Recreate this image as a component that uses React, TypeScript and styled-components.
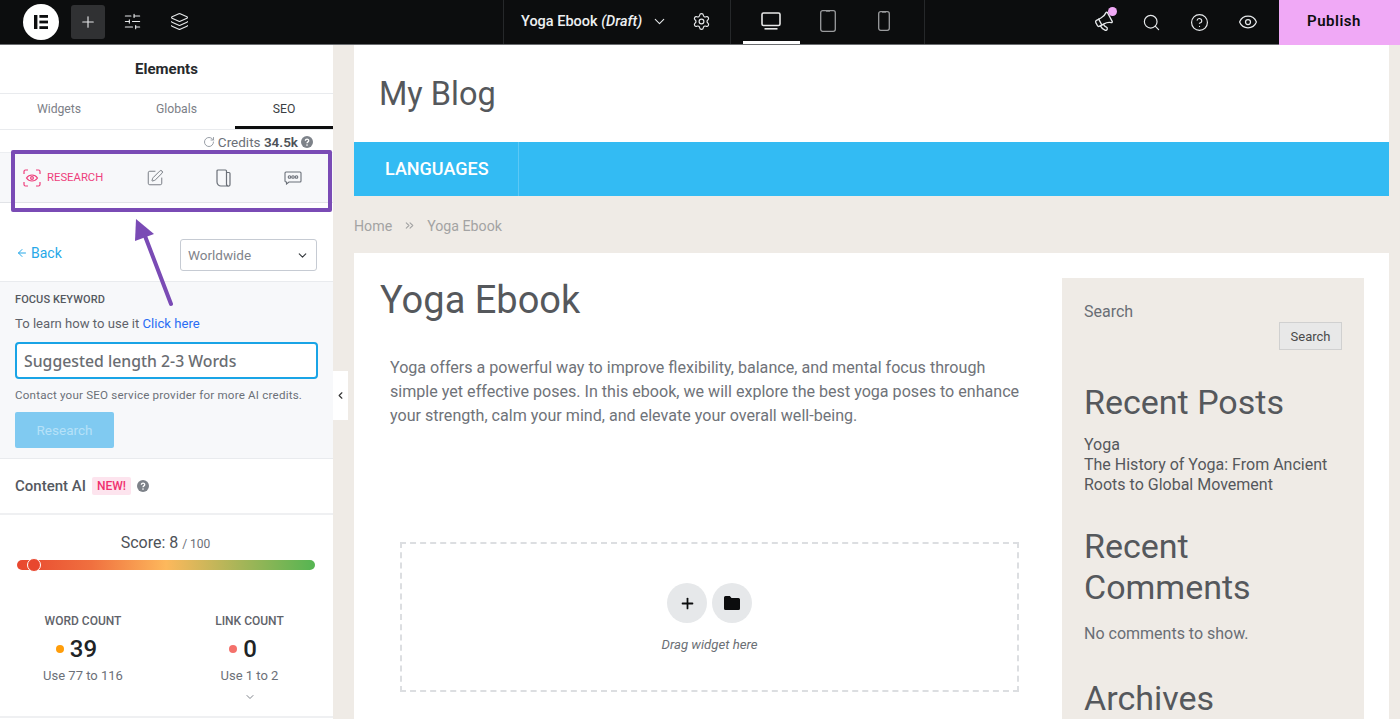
import React from 'react';
import styled, { createGlobalStyle } from 'styled-components';
import {
  SlidersHorizontal,
  Layers,
  Plus,
  Settings,
  ChevronDown,
  ChevronLeft,
  Megaphone,
  Search,
  CircleHelp,
  Eye,
  SquarePen,
  RotateCw,
  ArrowLeft,
  ChevronsRight,
} from 'lucide-react';

const GlobalStyle = createGlobalStyle`
  html, body {
    margin: 0;
    padding: 0;
    overflow: hidden;
    font-family: Roboto, "Liberation Sans", sans-serif;
  }
  * { box-sizing: border-box; }
`;

const Page = styled.div`
  position: relative;
  width: 1400px;
  height: 719px;
  overflow: hidden;
  display: flex;
  flex-direction: column;
  background: #efebe6;
`;

/* top bar */
const TopBar = styled.header`
  height: 45px;
  flex: none;
  display: flex;
  background: #0c0d0e;
  color: #e6e8ea;
  border-bottom: 1px solid #6b6d70;
`;

const BarLeft = styled.div`
  width: 503px;
  display: flex;
  align-items: center;
  padding: 0 0 1px 23px;
`;

const LogoCircle = styled.div`
  width: 36px;
  height: 36px;
  border-radius: 50%;
  background: #fff;
  display: flex;
  align-items: center;
  justify-content: center;
`;

const AddButton = styled.div`
  width: 34px;
  height: 34px;
  margin-left: 12px;
  border-radius: 3px;
  background: #303133;
  display: flex;
  align-items: center;
  justify-content: center;
`;

const BarIcon = styled.div<{ $w: number }>`
  width: ${(p) => p.$w}px;
  display: flex;
  align-items: center;
  justify-content: center;
  position: relative;
`;

const DocGroup = styled.div`
  width: 228px;
  display: flex;
  align-items: center;
  padding: 0 0 1px 17px;
  border-left: 1px solid #26282a;
  border-right: 1px solid #26282a;
`;

const DocTitle = styled.span`
  font-size: 14.5px;
  font-weight: 500;
  color: #eef0f2;
  white-space: pre;
  i {
    font-weight: 500;
  }
`;

const Devices = styled.div`
  width: 194px;
  display: flex;
  padding-left: 12px;
  border-right: 1px solid #26282a;
`;

const DeviceTab = styled.div<{ $active?: boolean }>`
  width: 56.5px;
  display: flex;
  align-items: center;
  justify-content: center;
  border-bottom: 3px solid ${(p) => (p.$active ? '#fff' : 'transparent')};
  color: ${(p) => (p.$active ? '#e8e8e8' : '#9b9c9e')};
`;

const BarRight = styled.div`
  flex: 1;
  display: flex;
  align-items: center;
  padding-left: 155px;
  justify-content: flex-start;
`;

const TiltedIcon = styled.span`
  display: flex;
  transform: rotate(-28deg);
`;

const NotifyDot = styled.span`
  position: absolute;
  top: -5px;
  right: 10px;
  width: 9px;
  height: 9px;
  border-radius: 50%;
  background: #f0a8f5;
`;

const PublishButton = styled.div`
  margin-left: auto;
  width: 121px;
  height: 45px;
  padding: 0 11px 2px 0;
  background: #f0a9f6;
  color: #0c0d0e;
  font-size: 15px;
  font-weight: 600;
  letter-spacing: 0.5px;
  display: flex;
  align-items: center;
  justify-content: center;
`;

/* editor body */
const Body = styled.div`
  flex: 1;
  min-height: 0;
  display: flex;
`;

const Panel = styled.aside`
  width: 333px;
  flex: none;
  background: #fff;
  display: flex;
  flex-direction: column;
  color: #55595f;
`;

const PanelTitle = styled.div`
  height: 49px;
  flex: none;
  display: flex;
  align-items: center;
  justify-content: center;
  font-size: 15px;
  font-weight: 700;
  color: #26292c;
  border-bottom: 1px solid #e9ebee;
`;

const Tabs = styled.div`
  height: 36px;
  flex: none;
  display: flex;
  border-bottom: 1px solid #e9ebee;
`;

const Tab = styled.div<{ $active?: boolean; $w: number }>`
  width: ${(p) => p.$w}px;
  display: flex;
  align-items: center;
  justify-content: center;
  padding-bottom: 2px;
  font-size: 12.2px;
  color: ${(p) => (p.$active ? '#3a3e43' : '#7c8087')};
  border-bottom: 3px solid ${(p) => (p.$active ? '#0c0d0e' : 'transparent')};
`;

const CreditsRow = styled.div`
  height: 22px;
  flex: none;
  display: flex;
  align-items: center;
  justify-content: flex-end;
  gap: 3px;
  padding: 2px 20px 0 0;
  font-size: 13.5px;
  color: #6b7078;
  b {
    color: #4e5258;
    font-weight: 600;
  }
`;

const ToolTabs = styled.div`
  height: 51px;
  flex: none;
  display: flex;
  align-items: center;
  background: #f7f8fa;
  border-top: 1px solid #eceef1;
  border-bottom: 1px solid #e1e3e7;
`;

const ResearchTab = styled.div`
  width: 120px;
  padding-left: 23px;
  display: flex;
  align-items: center;
  gap: 6px;
  font-size: 11.3px;
  color: #ee3f7c;
`;

const ToolIcon = styled.div`
  width: 69px;
  display: flex;
  justify-content: center;
  color: #6b7078;
`;

const BackRow = styled.div`
  height: 79px;
  flex: none;
  display: flex;
  align-items: center;
  justify-content: space-between;
  padding: 26px 16px 0 16px;
  border-bottom: 1px solid #e9ebee;
`;

const BackLink = styled.div`
  display: flex;
  align-items: center;
  gap: 3px;
  margin-top: -5px;
  color: #27a8e8;
  font-size: 14px;
`;

const SelectBox = styled.div`
  width: 137px;
  height: 32px;
  display: flex;
  align-items: center;
  justify-content: space-between;
  padding: 0 7px;
  border: 1px solid #c6cbd3;
  border-radius: 3px;
  background: #fff;
  color: #7f848b;
  font-size: 13.5px;
  svg {
    color: #33373b;
  }
`;

const KeywordBlock = styled.div`
  height: 177px;
  flex: none;
  display: flex;
  flex-direction: column;
  padding: 11px 15px 0;
  background: #f7f8fa;
  border-bottom: 1px solid #e9ebee;
`;

const Label = styled.div`
  font-size: 11px;
  font-weight: 500;
  color: #55595f;
  letter-spacing: 0.1px;
`;

const Hint = styled.div`
  margin-top: 10px;
  font-size: 13.1px;
  color: #5f636a;
  a {
    color: #2a6df4;
  }
`;

const KeywordInput = styled.div`
  width: 303px;
  height: 37px;
  margin-top: 11px;
  display: flex;
  align-items: center;
  padding-left: 7px;
  background: #fff;
  border: 2px solid #19a4e6;
  border-radius: 4px;
  font-family: "Noto Sans", "Open Sans", sans-serif;
  font-size: 15.8px;
  font-weight: 500;
  color: #6a6d72;
`;

const Note = styled.div`
  margin-top: 9px;
  font-size: 11.6px;
  letter-spacing: 0.2px;
  color: #6b7078;
`;

const ResearchButton = styled.div`
  width: 99px;
  height: 36px;
  margin-top: 10px;
  display: flex;
  align-items: center;
  justify-content: center;
  background: #80caf1;
  border-radius: 2px;
  color: #b5e1f8;
  font-size: 13.5px;
`;

const ContentAiRow = styled.div`
  height: 56px;
  flex: none;
  display: flex;
  align-items: center;
  padding: 0 0 0 15px;
  font-size: 15px;
  font-weight: 500;
  color: #55595f;
  border-bottom: 2px solid #eff0f2;
`;

const NewBadge = styled.span`
  margin: 0 6px;
  padding: 2px 5px;
  height: 18px;
  display: flex;
  align-items: center;
  background: #fde4ee;
  border-radius: 2px;
  color: #f0306f;
  font-size: 12px;
  font-weight: 500;
`;

const ScoreBlock = styled.div`
  flex: 1;
  display: flex;
  flex-direction: column;
  align-items: center;
  padding-top: 18px;
  border-bottom: 2px solid #eff0f2;
  margin-bottom: 1px;
`;

const ScoreText = styled.div`
  margin-right: 2px;
  font-size: 16px;
  color: #4e5258;
  small {
    font-size: 12px;
    color: #6b7078;
  }
`;

const ScoreBar = styled.div`
  position: relative;
  width: 298px;
  height: 10px;
  margin: 8px 2px 0 0;
  border-radius: 5px;
  background: linear-gradient(90deg, #e8472f 0%, #f0703f 25%, #fdb85c 50%, #a6b558 75%, #55b552 100%);
`;

const ScoreKnob = styled.span`
  position: absolute;
  left: 10px;
  top: -2px;
  width: 14px;
  height: 14px;
  border-radius: 50%;
  background: #e8472f;
  border: 1.5px solid #fff;
`;

const Stats = styled.div`
  width: 100%;
  display: flex;
  margin-top: 44px;
`;

const Stat = styled.div<{ $w: number }>`
  width: ${(p) => p.$w}px;
  display: flex;
  flex-direction: column;
  align-items: center;
`;

const StatLabel = styled.div`
  font-size: 12px;
  font-weight: 500;
  color: #5f636a;
`;

const StatValue = styled.div`
  margin: 7px 13px 0 0;
  display: flex;
  align-items: center;
  gap: 6px;
  font-size: 24px;
  line-height: 28px;
  font-weight: 500;
  color: #202326;
`;

const Dot = styled.span<{ $color: string }>`
  width: 8px;
  height: 8px;
  border-radius: 50%;
  background: ${(p) => p.$color};
`;

const StatHint = styled.div`
  margin-top: 5px;
  font-size: 13px;
  color: #6b7078;
`;

const StatChevron = styled.div`
  display: flex;
  color: #7f848b;
  margin-top: 8px;
`;

/* preview */
const Preview = styled.main`
  position: relative;
  flex: 1;
  min-width: 0;
  padding: 0 11px 0 21px;
  display: flex;
  flex-direction: column;
  color: #55585c;
`;

const CollapseHandle = styled.div`
  position: absolute;
  left: 0;
  top: 326px;
  width: 15px;
  height: 49px;
  background: #fff;
  display: flex;
  align-items: center;
  justify-content: center;
  color: #333;
`;

const SiteHeader = styled.div`
  height: 97px;
  flex: none;
  background: #fff;
  display: flex;
  align-items: center;
  padding-left: 25px;
  font-size: 32.5px;
`;

const SiteNav = styled.nav`
  height: 54px;
  flex: none;
  background: #33bbf3;
  display: flex;
`;

const NavItem = styled.div`
  width: 165px;
  display: flex;
  align-items: center;
  padding: 0 0 1px 31px;
  border-right: 1px solid #5cc8f5;
  color: #fff;
  font-size: 18px;
  font-weight: 500;
`;

const Breadcrumb = styled.div`
  height: 57px;
  flex: none;
  display: flex;
  align-items: center;
  gap: 11px;
  padding-top: 2px;
  font-size: 14.2px;
  color: #a3a3a3;
`;

const Content = styled.div`
  flex: 1;
  min-height: 0;
  background: #fff;
  display: flex;
  overflow: hidden;
  padding: 25px 25px 0 26px;
`;

const Article = styled.article`
  width: 682px;
  flex: none;
`;

const PageTitle = styled.h1`
  margin: 0;
  font-size: 38px;
  font-weight: 400;
  line-height: 44px;
`;

const Intro = styled.p`
  margin: 34px 0 0 10px;
  width: 640px;
  font-size: 16.1px;
  line-height: 24px;
  color: #6f7379;
`;

const DropZone = styled.div`
  margin: 114px 0 0 20px;
  width: 619px;
  height: 150px;
  border: 2px dashed #dcdee1;
  display: flex;
  flex-direction: column;
  align-items: center;
  padding-top: 39px;
`;

const DropButtons = styled.div`
  display: flex;
  gap: 5px;
`;

const RoundButton = styled.div`
  width: 40px;
  height: 40px;
  border-radius: 50%;
  background: #e6e8ea;
  color: #0c0d0e;
  display: flex;
  align-items: center;
  justify-content: center;
`;

const DropText = styled.div`
  margin-top: 14px;
  font-size: 13.2px;
  font-style: italic;
  color: #6b6f75;
`;

const SideColumn = styled.div`
  flex: 1;
  background: #efebe6;
  padding: 24px 22px 0;
  display: flex;
  flex-direction: column;
`;

const SearchLabel = styled.div`
  font-size: 16px;
  line-height: 20px;
  color: #696e75;
`;

const SearchButton = styled.div`
  align-self: flex-end;
  width: 63px;
  height: 31px;
  display: flex;
  align-items: center;
  justify-content: center;
  background: #e8e8e8;
  border: 1px solid #d0d0d0;
  font-size: 13px;
  color: #4a4a4a;
`;

const WidgetTitle = styled.h2<{ $top: number }>`
  margin: ${(p) => p.$top}px 0 0;
  font-size: 34px;
  line-height: 41px;
  font-weight: 400;
  color: #55585c;
`;

const PostLinks = styled.div`
  margin-top: 12px;
  font-size: 16px;
  line-height: 20px;
  color: #55585c;
`;

const Muted = styled.div`
  margin-top: 16px;
  font-size: 16px;
  color: #696e75;
`;

/* annotation drawn over the panel */
const Highlight = styled.div`
  position: absolute;
  left: 11px;
  top: 150px;
  width: 321px;
  height: 62px;
  border: 4px solid #7a4bb5;
  border-radius: 2px;
  pointer-events: none;
`;

const ArrowMark = styled.svg`
  position: absolute;
  left: 125px;
  top: 210px;
  pointer-events: none;
`;

const ElementorLogo = () => (
  <svg width="18" height="18" viewBox="0 0 18 18" fill="#0c0d0e">
    <rect x="2" y="2" width="3.4" height="14" />
    <rect x="7.4" y="2" width="8.6" height="2.8" />
    <rect x="7.4" y="7.6" width="8.6" height="2.8" />
    <rect x="7.4" y="13.2" width="8.6" height="2.8" />
  </svg>
);

const MonitorIcon = () => (
  <svg width="20" height="18" viewBox="0 0 20 18" fill="none" stroke="currentColor" strokeWidth="1.6">
    <rect x="1" y="1" width="18" height="12.5" rx="1.5" />
    <path d="M3.5 16.8h13" />
  </svg>
);

const TabletIcon = () => (
  <svg width="16" height="22" viewBox="0 0 16 22" fill="none" stroke="currentColor" strokeWidth="1.3">
    <rect x="0.7" y="0.7" width="14.6" height="20.6" rx="2" />
    <path d="M6 1h4" />
  </svg>
);

const PhoneIcon = () => (
  <svg width="12" height="20" viewBox="0 0 12 20" fill="none" stroke="currentColor" strokeWidth="1.3">
    <rect x="0.7" y="0.7" width="10.6" height="18.6" rx="2" />
    <path d="M4 1h4" />
  </svg>
);

const HelpDot = ({ size = 12 }: { size?: number }) => (
  <svg width={size} height={size} viewBox="0 0 12 12">
    <circle cx="6" cy="6" r="6" fill="#7d8289" />
    <path d="M4.4 4.7c0-2 3.3-2 3.3 0 0 1.2-1.7 1.2-1.7 2.5" stroke="#fff" strokeWidth="1.3" fill="none" />
    <circle cx="6" cy="9.1" r="0.8" fill="#fff" />
  </svg>
);

const ResearchIcon = () => (
  <svg width="18" height="18" viewBox="0 0 18 18" fill="none" stroke="#ee3f7c" strokeWidth="1.2">
    <path d="M1 5V2.5A1.5 1.5 0 0 1 2.5 1H5M13 1h2.5A1.5 1.5 0 0 1 17 2.5V5M17 13v2.5a1.5 1.5 0 0 1-1.5 1.5H13M5 17H2.5A1.5 1.5 0 0 1 1 15.5V13" />
    <path d="M3.5 9S5.5 6 9 6s5.5 3 5.5 3-2 3-5.5 3-5.5-3-5.5-3Z" />
    <circle cx="9" cy="9" r="1.4" />
  </svg>
);

const PageIcon = () => (
  <svg width="15" height="18" viewBox="0 0 15 18" fill="none" stroke="#6b7078" strokeWidth="1.2">
    <path d="M2 1h7.5a1 1 0 0 1 1 1v13.5c0 .8.5 1.5 1.3 1.5H5a4 4 0 0 1-4-4V2a1 1 0 0 1 1-1Z" />
    <path d="M10.5 3.5H13a1 1 0 0 1 1 1v11a1.5 1.5 0 0 1-3 .2" />
  </svg>
);

const ChatIcon = () => (
  <svg width="18" height="14" viewBox="0 0 18 14" fill="none" stroke="#6b7078" strokeWidth="1.1">
    <path d="M2 1h14a1 1 0 0 1 1 1v8a1 1 0 0 1-1 1H5l-2.5 2v-2H2a1 1 0 0 1-1-1V2a1 1 0 0 1 1-1Z" />
    <circle cx="5.5" cy="6" r="1.3" />
    <circle cx="9" cy="6" r="1.3" />
    <circle cx="12.5" cy="6" r="1.3" />
  </svg>
);

const FolderIcon = () => (
  <svg width="16" height="14" viewBox="0 0 16 14" fill="#0c0d0e">
    <path d="M1.5 0h4.3l1.7 2h7A1.5 1.5 0 0 1 16 3.5v9a1.5 1.5 0 0 1-1.5 1.5h-13A1.5 1.5 0 0 1 0 12.5v-11A1.5 1.5 0 0 1 1.5 0Z" />
  </svg>
);

const App = () => {
  return (
    <Page>
      <GlobalStyle />
      <TopBar>
        <BarLeft>
          <LogoCircle>
            <ElementorLogo />
          </LogoCircle>
          <AddButton>
            <Plus size={18} strokeWidth={1.5} />
          </AddButton>
          <BarIcon $w={55}>
            <SlidersHorizontal size={19} strokeWidth={1.4} />
          </BarIcon>
          <BarIcon $w={38}>
            <Layers size={19} strokeWidth={1.4} />
          </BarIcon>
        </BarLeft>
        <DocGroup>
          <DocTitle>
            Yoga Ebook <i>(Draft)</i>
          </DocTitle>
          <BarIcon $w={34}>
            <ChevronDown size={17} strokeWidth={1.5} />
          </BarIcon>
          <BarIcon $w={50}>
            <Settings size={19} strokeWidth={1.5} />
          </BarIcon>
        </DocGroup>
        <Devices>
          <DeviceTab $active>
            <MonitorIcon />
          </DeviceTab>
          <DeviceTab>
            <TabletIcon />
          </DeviceTab>
          <DeviceTab>
            <PhoneIcon />
          </DeviceTab>
        </Devices>
        <BarRight>
          <BarIcon $w={47}>
            <TiltedIcon>
              <Megaphone size={20} strokeWidth={1.6} />
            </TiltedIcon>
            <NotifyDot />
          </BarIcon>
          <BarIcon $w={48}>
            <Search size={19} strokeWidth={1.5} />
          </BarIcon>
          <BarIcon $w={49}>
            <CircleHelp size={19} strokeWidth={1.5} />
          </BarIcon>
          <BarIcon $w={48}>
            <Eye size={20} strokeWidth={1.5} />
          </BarIcon>
          <PublishButton>Publish</PublishButton>
        </BarRight>
      </TopBar>

      <Body>
        <Panel>
          <PanelTitle>Elements</PanelTitle>
          <Tabs>
            <Tab $w={118}>Widgets</Tab>
            <Tab $w={117}>Globals</Tab>
            <Tab $w={98} $active>
              SEO
            </Tab>
          </Tabs>
          <CreditsRow>
            <RotateCw size={12} color="#9aa0a8" />
            <span>
              Credits <b>34.5k</b>
            </span>
            <HelpDot />
          </CreditsRow>
          <ToolTabs>
            <ResearchTab>
              <ResearchIcon />
              RESEARCH
            </ResearchTab>
            <ToolIcon>
              <SquarePen size={18} strokeWidth={1.2} />
            </ToolIcon>
            <ToolIcon>
              <PageIcon />
            </ToolIcon>
            <ToolIcon>
              <ChatIcon />
            </ToolIcon>
          </ToolTabs>
          <BackRow>
            <BackLink>
              <ArrowLeft size={12} />
              Back
            </BackLink>
            <SelectBox>
              Worldwide
              <ChevronDown size={13} strokeWidth={2} />
            </SelectBox>
          </BackRow>
          <KeywordBlock>
            <Label>FOCUS KEYWORD</Label>
            <Hint>
              To learn how to use it <a>Click here</a>
            </Hint>
            <KeywordInput>Suggested length 2-3 Words</KeywordInput>
            <Note>Contact your SEO service provider for more AI credits.</Note>
            <ResearchButton>Research</ResearchButton>
          </KeywordBlock>
          <ContentAiRow>
            Content AI
            <NewBadge>NEW!</NewBadge>
            <HelpDot />
          </ContentAiRow>
          <ScoreBlock>
            <ScoreText>
              Score: 8 <small>/ 100</small>
            </ScoreText>
            <ScoreBar>
              <ScoreKnob />
            </ScoreBar>
            <Stats>
              <Stat $w={166}>
                <StatLabel>WORD COUNT</StatLabel>
                <StatValue>
                  <Dot $color="#ff9d0a" />
                  39
                </StatValue>
                <StatHint>Use 77 to 116</StatHint>
              </Stat>
              <Stat $w={167}>
                <StatLabel>LINK COUNT</StatLabel>
                <StatValue>
                  <Dot $color="#f4716b" />0
                </StatValue>
                <StatHint>Use 1 to 2</StatHint>
                <StatChevron>
                  <ChevronDown size={12} />
                </StatChevron>
              </Stat>
            </Stats>
          </ScoreBlock>
        </Panel>

        <Preview>
          <CollapseHandle>
            <ChevronLeft size={11} strokeWidth={2.5} />
          </CollapseHandle>
          <SiteHeader>My Blog</SiteHeader>
          <SiteNav>
            <NavItem>LANGUAGES</NavItem>
          </SiteNav>
          <Breadcrumb>
            Home
            <ChevronsRight size={13} />
            Yoga Ebook
          </Breadcrumb>
          <Content>
            <Article>
              <PageTitle>Yoga Ebook</PageTitle>
              <Intro>
                Yoga offers a powerful way to improve flexibility, balance, and mental focus through simple yet
                effective poses. In this ebook, we will explore the best yoga poses to enhance your strength, calm
                your mind, and elevate your overall well-being.
              </Intro>
              <DropZone>
                <DropButtons>
                  <RoundButton>
                    <Plus size={17} strokeWidth={2.5} />
                  </RoundButton>
                  <RoundButton>
                    <FolderIcon />
                  </RoundButton>
                </DropButtons>
                <DropText>Drag widget here</DropText>
              </DropZone>
            </Article>
            <SideColumn>
              <SearchLabel>Search</SearchLabel>
              <SearchButton>Search</SearchButton>
              <WidgetTitle $top={32}>Recent Posts</WidgetTitle>
              <PostLinks>
                Yoga
                <br />
                The History of Yoga: From Ancient Roots to Global Movement
              </PostLinks>
              <WidgetTitle $top={31}>Recent Comments</WidgetTitle>
              <Muted>No comments to show.</Muted>
              <WidgetTitle $top={35}>Archives</WidgetTitle>
            </SideColumn>
          </Content>
        </Preview>
      </Body>

      <Highlight />
      <ArrowMark width="60" height="100" viewBox="0 0 60 100">
        <path d="M46 94 L20 26" stroke="#7a4bb5" strokeWidth="4" strokeLinecap="round" />
        <path d="M11 9 L10 31 L29 24 Z" fill="#7a4bb5" />
      </ArrowMark>
    </Page>
  );
};

export default App;
